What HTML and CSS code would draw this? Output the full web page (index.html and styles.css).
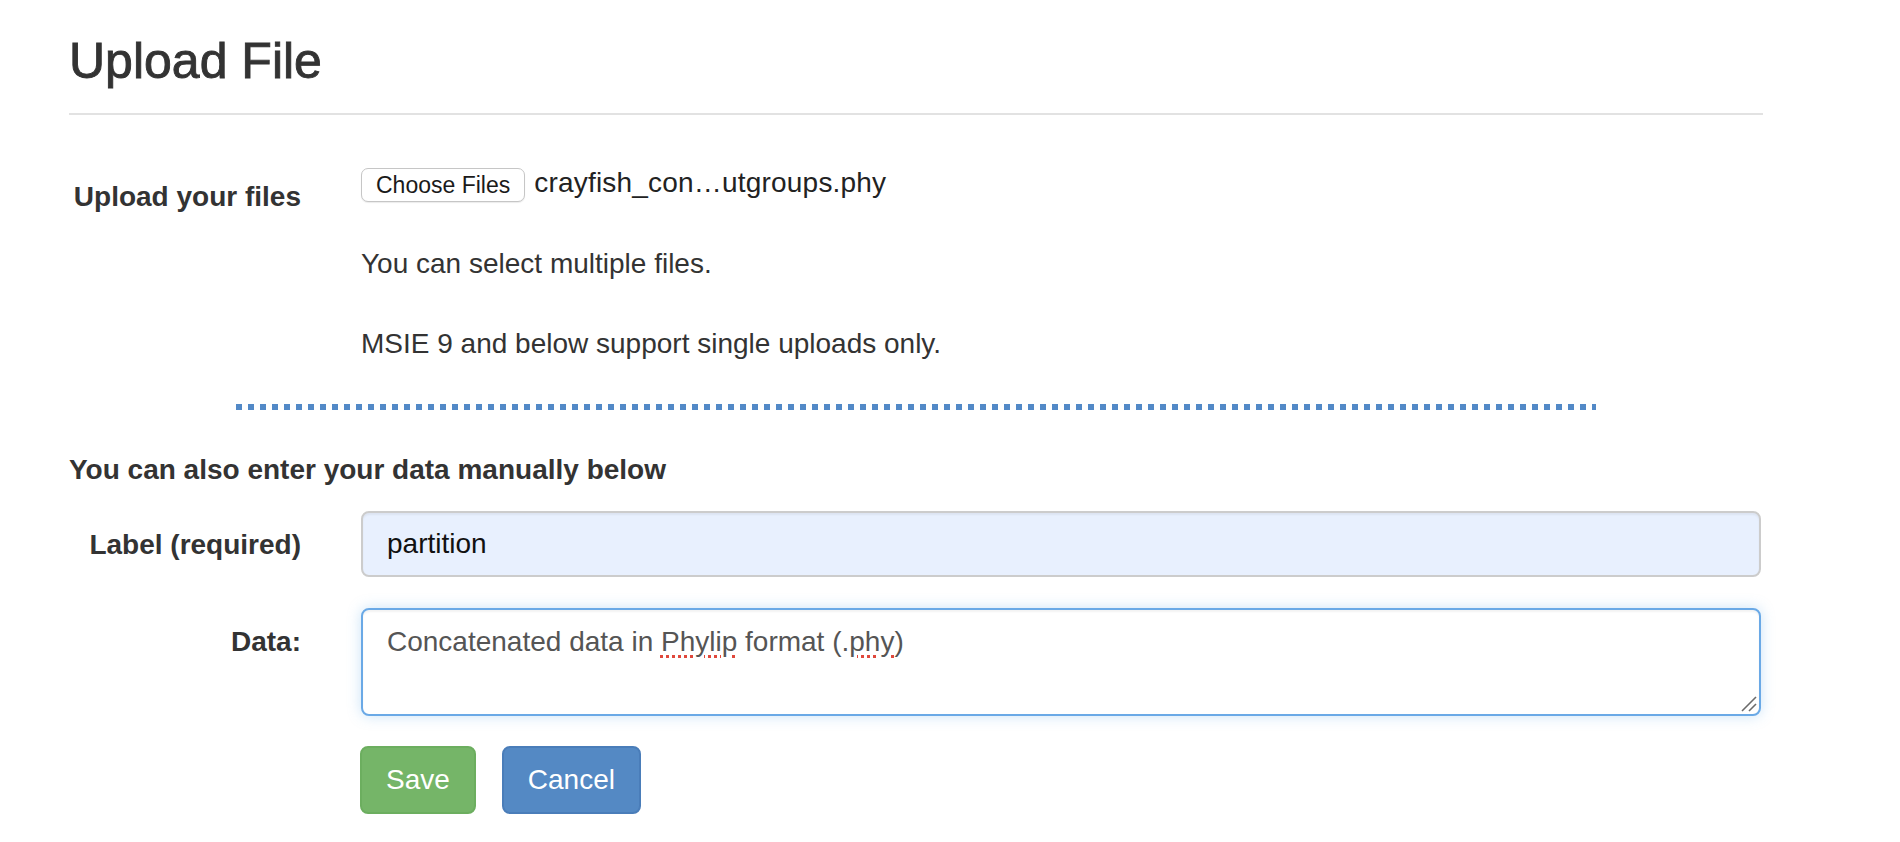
FILE: index.html
```html
<!DOCTYPE html>
<html lang="en">
<head>
<meta charset="utf-8">
<title>Upload File</title>
<link rel="stylesheet" href="styles.css">
</head>
<body>
<div class="page">
  <header class="page-header">
    <h3 class="title">Upload File</h3>
  </header>

  <div class="form-row upload-row">
    <div class="label upload-label">Upload your files</div>
    <div class="control">
      <div class="file-line">
        <button class="choose" type="button">Choose Files</button>
        <span class="fname">crayfish_con…utgroups.phy</span>
      </div>
      <p class="help">You can select multiple files.</p>
      <p class="help">MSIE 9 and below support single uploads only.</p>
    </div>
  </div>

  <div class="divider"></div>

  <div class="manual-title">You can also enter your data manually below</div>

  <div class="form-row field-row">
    <label class="label" for="lbl">Label (required)</label>
    <div class="control">
      <input id="lbl" class="text-input" type="text" value="partition">
    </div>
  </div>

  <div class="form-row data-row">
    <div class="label">Data:</div>
    <div class="control">
      <div class="textarea">Concatenated data in <span class="misspelled">Phylip</span> format (.<span class="misspelled">phy</span>)<svg class="resize" width="16" height="16" viewBox="0 0 16 16"><line x1="1" y1="15" x2="15" y2="1" stroke="#6b6b6b" stroke-width="1.6"/><line x1="8" y1="15" x2="15" y2="8" stroke="#6b6b6b" stroke-width="1.6"/></svg></div>
    </div>
  </div>

  <div class="form-row button-row">
    <div class="label"></div>
    <div class="control buttons">
      <button class="btn btn-save" type="button">Save</button>
      <button class="btn btn-cancel" type="button">Cancel</button>
    </div>
  </div>
</div>
</body>
</html>
```

FILE: styles.css
```css
html, body {
  margin: 0;
  padding: 0;
  background: #ffffff;
}

body {
  font-family: "Liberation Sans", Arial, Helvetica, sans-serif;
  font-size: 28px;
  line-height: 40px;
  color: #333333;
}

.page {
  width: 1694px;
  margin-left: 69px;
}

.page-header {
  padding-top: 35px;
  padding-bottom: 25px;
  border-bottom: 2px solid #e2e2e2;
}

.title {
  margin: 0;
  font-size: 50px;
  line-height: 53px;
  font-weight: 500;
  color: #333333;
  -webkit-text-stroke: 0.9px #333333;
}

.form-row {
  display: flex;
  align-items: flex-start;
  gap: 60px;
}

.label {
  width: 232px;
  flex: 0 0 232px;
  text-align: right;
  font-weight: bold;
  padding-top: 14px;
  color: #333333;
}

.control {
  width: 1400px;
  flex: 0 0 1400px;
}

.upload-row {
  margin-top: 49px;
}

.upload-label {
  padding-top: 13px;
}

.file-line {
  display: flex;
  align-items: center;
  height: 40px;
}

.choose {
  height: 34px;
  box-sizing: border-box;
  padding: 0 14px;
  margin: 2px 9px 0 0;
  font-family: "Liberation Sans", Arial, Helvetica, sans-serif;
  font-size: 23px;
  line-height: 30px;
  color: #1a1a1a;
  background: #ffffff;
  border: 1px solid #c6c6c6;
  border-radius: 7px;
  box-shadow: 0 1px 1px rgba(0, 0, 0, 0.08);
}

.fname {
  font-size: 28px;
  line-height: 40px;
  color: #222222;
  position: relative;
  top: -1px;
  letter-spacing: 0.2px;
}

.help {
  margin: 40px 0 0 0;
}

.divider {
  width: 1360px;
  height: 6px;
  margin: 40px auto 40px auto;
  background: repeating-linear-gradient(90deg, #5289c7 0, #5289c7 6px, transparent 6px, transparent 12px);
}

.manual-title {
  font-weight: bold;
}

.field-row {
  margin-top: 21px;
}

.text-input {
  display: block;
  width: 100%;
  height: 66px;
  box-sizing: border-box;
  margin: 0;
  padding: 0 24px;
  font-family: "Liberation Sans", Arial, Helvetica, sans-serif;
  font-size: 28px;
  color: #111111;
  background: #e8f0fe;
  border: 2px solid #cccccc;
  border-radius: 8px;
  box-shadow: inset 0 2px 2px rgba(0, 0, 0, 0.05);
  outline: none;
}

.data-row {
  margin-top: 31px;
}

.textarea {
  position: relative;
  box-sizing: border-box;
  height: 108px;
  padding: 12px 24px;
  color: #555555;
  background: #ffffff;
  border: 2px solid #6aa9e6;
  border-radius: 8px;
  box-shadow: inset 0 2px 2px rgba(0, 0, 0, 0.05), 0 0 14px rgba(102, 175, 233, 0.35);
}

.misspelled {
  text-decoration: underline dotted #e0483c;
  text-decoration-thickness: 3px;
  text-underline-offset: 4px;
}

.resize {
  position: absolute;
  right: 2px;
  bottom: 2px;
}

.button-row {
  margin-top: 30px;
}

.buttons {
  display: flex;
  gap: 26px;
  margin-left: -1px;
}

.btn {
  height: 68px;
  box-sizing: border-box;
  padding: 0 24px;
  font-family: "Liberation Sans", Arial, Helvetica, sans-serif;
  font-size: 28px;
  line-height: 40px;
  color: #ffffff;
  border-radius: 8px;
  border: 2px solid transparent;
}

.btn-save {
  background: #75b568;
  border-color: #6cae5f;
}

.btn-cancel {
  background: #5489c4;
  border-color: #4a7db9;
}
```
